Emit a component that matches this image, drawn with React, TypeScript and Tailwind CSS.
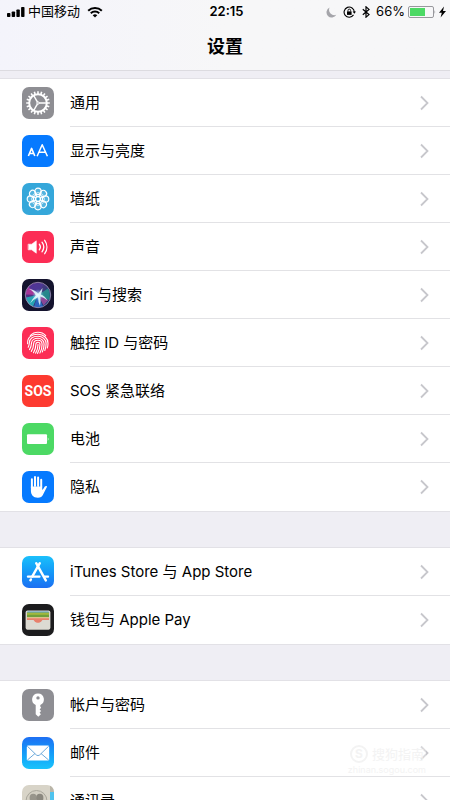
import type { ReactNode } from "react";

type Item = {
  label: string;
  tile: string;
  icon: ReactNode;
};

const range = (n: number) => Array.from({ length: n }, (_, i) => i);

function GearIcon() {
  return (
    <svg viewBox="0 0 32 32" fill="none" stroke="#fff">
      <circle cx="16" cy="16" r="8.8" strokeWidth="2" />
      {range(20).map((i) => (
        <path
          key={i}
          d="M16 7.2V4.2"
          strokeWidth="1.6"
          transform={`rotate(${i * 18} 16 16)`}
        />
      ))}
      {[90, 210, 330].map((deg) => (
        <path
          key={deg}
          d="M16 15V7.5"
          strokeWidth="1.4"
          transform={`rotate(${deg} 16 16)`}
        />
      ))}
      <circle cx="16" cy="16" r="1.2" strokeWidth="1" />
    </svg>
  );
}

function DisplayIcon() {
  return (
    <svg viewBox="0 0 32 32" fill="none" stroke="#fff" strokeLinejoin="round">
      <path d="M6.4 21L9.6 13.4L12.8 21M7.5 18.5h4.2" strokeWidth="1.6" />
      <path d="M15.1 21.2L20.2 9.8L25.4 21.2M17 17.3h6.4" strokeWidth="1.5" />
    </svg>
  );
}

function WallpaperIcon() {
  return (
    <svg viewBox="0 0 32 32" fill="none" stroke="#fff" strokeWidth="1.2">
      {range(8).map((i) => (
        <g key={i} transform={`rotate(${i * 45} 16 16)`}>
          <circle cx="16" cy="8.4" r="3.2" fill="#fff" fillOpacity="0.15" />
          <ellipse cx="16" cy="11.8" rx="1.7" ry="2.3" strokeWidth="0.7" />
        </g>
      ))}
      <circle cx="16" cy="16" r="2.6" />
    </svg>
  );
}

function SoundIcon() {
  return (
    <svg viewBox="0 0 32 32" fill="none" stroke="#fff" strokeLinecap="round">
      <path
        d="M6.5 13.2h3.2L14.3 9.8v12.4L9.7 18.8H6.5z"
        fill="#fff"
        strokeWidth="0.6"
      />
      <path d="M17.3 13.2a4.6 4.6 0 0 1 0 5.6" strokeWidth="1.3" />
      <path d="M20 11.2a8 8 0 0 1 0 9.6" strokeWidth="1.3" />
      <path d="M22.7 9.3a11.4 11.4 0 0 1 0 13.4" strokeWidth="1.3" />
    </svg>
  );
}

function SiriIcon() {
  return (
    <svg viewBox="0 0 32 32" fill="none">
      <defs>
        <radialGradient id="siri-core">
          <stop offset="0" stopColor="#fff" />
          <stop offset="0.3" stopColor="#c8f6ff" stopOpacity="0.7" />
          <stop offset="1" stopColor="#5fb8e8" stopOpacity="0" />
        </radialGradient>
        <linearGradient id="siri-orb" x1="0.1" y1="0.2" x2="0.9" y2="0.8">
          <stop offset="0" stopColor="#5a2a8c" />
          <stop offset="0.45" stopColor="#453a80" />
          <stop offset="1" stopColor="#123f72" />
        </linearGradient>
      </defs>
      <circle cx="16" cy="16" r="12.6" fill="url(#siri-orb)" />
      <path d="M16 16L5.5 9.5Q12 2 21.5 5.5z" fill="#4f379c" opacity="0.7" />
      <path d="M16 16L4 18.5Q5 25.5 11 27.5z" fill="#1fc8c4" opacity="0.75" />
      <path d="M16 16L12 27.8Q17 29.5 21 27.4z" fill="#2b6fd0" opacity="0.8" />
      <path d="M16 16L27 21Q29 15 26 9.5z" fill="#25b997" opacity="0.6" />
      <path d="M16 16L6.5 8Q4 12 3.8 15.5z" fill="#d13aa2" opacity="0.65" />
      <path d="M16 16L21.6 26.6L26.6 21z" fill="#d04fae" opacity="0.6" />
      <circle cx="16" cy="16" r="6" fill="url(#siri-core)" />
      <path
        d="M16.2 14.8Q13 10.5 7 10Q12 12.5 13.8 16.5Q10 20 8 24.5Q12 20 16 18.3Q16 23 18 27Q19 21 18.3 17.6Q22 18.5 25.5 21.5Q22.5 16.8 18.8 15.6Q20.5 12 20.5 9Q18.5 11.500 16.2 14.8z"
        fill="#e6fbff"
        opacity="0.85"
      />
      <circle cx="16" cy="16" r="12.7" stroke="#b9a5cc" strokeWidth="0.7" />
    </svg>
  );
}

function TouchIdIcon() {
  return (
    <svg
      viewBox="0 0 32 32"
      fill="none"
      stroke="#fff"
      strokeWidth="1.1"
      strokeLinecap="round"
    >
      <path d="M8.3 8.6a10.6 10.6 0 0 1 15.4 0" />
      <path d="M5.6 16.6C5.2 9.8 10 7.3 16 7.3S26 11.5 26 16.2c0 2 0 3-.7 4.8" />
      <path d="M6.2 20.2c1-2 1.1-3.3 1.2-4.7C7.8 11.2 11.5 9.3 16 9.3s8 3.2 8.1 7.3c0 2.6-.3 4.6-1.3 6.9" />
      <path d="M7.5 22.6c1.6-2.6 1.9-4.3 2-6.6.2-3 3.2-4.7 6.5-4.7s6 2.5 6.1 5.6c0 3-.6 5.6-1.8 8" />
      <path d="M9.3 24.4c2-3 2.3-5.3 2.4-8 .1-2 2-3.1 4.3-3.1s4 1.7 4.1 3.9c0 3.3-.6 6.1-2.2 8.9" />
      <path d="M11.5 25.7c2-3.2 2.4-5.8 2.4-8.6 0-1.2 1-1.8 2.1-1.8s2 .8 2 2c0 3.4-.8 6.3-2.5 9.1" />
      <path d="M16 17.4c0 3.5-.7 6.1-2.4 8.7" />
    </svg>
  );
}

function BatteryIcon() {
  return (
    <svg viewBox="0 0 32 32" fill="#fff">
      <rect x="5" y="11.3" width="20" height="9.6" rx="1" />
      <path d="M25.8 14.3q1.6 1.8 0 3.6z" />
    </svg>
  );
}

function HandIcon() {
  return (
    <svg
      viewBox="0 0 32 32"
      fill="none"
      stroke="#fff"
      strokeWidth="2"
      strokeLinecap="round"
    >
      <path d="M9.9 17V8.2M13 15V5.9M16.1 15V6.4M19.2 16V8.8" />
      <path
        d="M8.9 15.5h11.3v3.6c1.1-.7 1.7-2.4 2.6-3.5.9-1 2.6-.6 2.1.5l-3.8 7.3c-1 2.2-2.6 3.3-5.2 3.3-4.8 0-7-3-7-7.2z"
        fill="#fff"
        stroke="none"
      />
    </svg>
  );
}

function AppStoreIcon() {
  return (
    <svg
      viewBox="0 0 32 32"
      fill="none"
      stroke="#fff"
      strokeWidth="2.4"
      strokeLinecap="round"
    >
      <path d="M14.2 7.2L23.8 24.4" />
      <path d="M17.8 7.2L10.3 20.4" />
      <path d="M8.9 23.4L8.4 24.3" />
      <path d="M6 20.6h11.4M22.5 20.6H26" />
    </svg>
  );
}

function WalletIcon() {
  return (
    <svg viewBox="0 0 32 32">
      <rect x="3.6" y="6.6" width="24.8" height="19" rx="1.8" fill="#d9d7cf" />
      <path d="M5 8.5q0-1 1-1h20q1 0 1 1v2H5z" fill="#4c9cc4" />
      <path d="M5 8.6h22v3H5z" fill="#a3b83c" />
      <path d="M5 10.8h22v2.8H5z" fill="#6f9f3a" />
      <path d="M5 13.2h22v2H5z" fill="#ecc58f" />
      <path d="M5 14.2h22V19H5z" fill="#e8806c" />
      <path
        d="M4 16h7.2c1.1 0 1.4 2.8 4.8 2.8s3.7-2.8 4.8-2.8H28v8.2q0 1.4-1.4 1.4H5.4Q4 25.6 4 24.2z"
        fill="#dcdad2"
      />
    </svg>
  );
}

function KeyIcon() {
  return (
    <svg viewBox="0 0 32 32" fill="#fff">
      <path
        fillRule="evenodd"
        d="M16 4.4a6 6 0 0 0-2.3 11.5v9.3l2.6 2.5 2.6-2.4-1.3-1.7 1.5-1.6-1.5-1.6 1.5-1.7-.8-1.2v-1.6A6 6 0 0 0 16 4.4zm0 2.8a1.7 1.7 0 1 1 0 3.4 1.7 1.7 0 0 1 0-3.4z"
      />
    </svg>
  );
}

function MailIcon() {
  return (
    <svg viewBox="0 0 32 32" strokeLinejoin="round">
      <rect x="4.8" y="8.6" width="22.4" height="15" rx="1.3" fill="#fff" />
      <path
        d="M5.3 9.2L14.4 18q1.6 1.3 3.2 0L26.7 9.2M5.3 23.1l7.7-6.6M26.7 23.1L19 16.5"
        fill="none"
        stroke="#5b9fd6"
        strokeWidth="0.9"
      />
    </svg>
  );
}

function ContactsIcon() {
  return (
    <svg viewBox="0 0 32 32">
      <path d="M28 0h4v7h-4z" fill="#b9b5a8" />
      <path d="M28 7h4v13h-4z" fill="#4fc3ee" />
      <path d="M28 20h4v12h-4z" fill="#f2a33c" />
      <circle cx="14.5" cy="16" r="10.5" fill="#d3cfc3" stroke="#a9a69b" />
      <ellipse cx="11.2" cy="13" rx="3.6" ry="4.2" fill="#98958b" />
      <ellipse cx="17.8" cy="13" rx="3.6" ry="4.2" fill="#8b887f" />
      <path d="M7 23q1-4.5 7.5-4.5T22 23q-7.5 5-15 0z" fill="#98958b" />
    </svg>
  );
}

const groups: Item[][] = [
  [
    { label: "通用", tile: "bg-[#8e8e93]", icon: <GearIcon /> },
    { label: "显示与亮度", tile: "bg-[#067aff]", icon: <DisplayIcon /> },
    { label: "墙纸", tile: "bg-[#35a7da]", icon: <WallpaperIcon /> },
    { label: "声音", tile: "bg-[#fc2d55]", icon: <SoundIcon /> },
    { label: "Siri 与搜索", tile: "bg-[#14132e]", icon: <SiriIcon /> },
    { label: "触控 ID 与密码", tile: "bg-[#fc2d55]", icon: <TouchIdIcon /> },
    {
      label: "SOS 紧急联络",
      tile: "bg-[#fd3a30]",
      icon: (
        <span className="font-['Roboto','Liberation_Sans',sans-serif] text-sm font-bold text-white">
          SOS
        </span>
      ),
    },
    { label: "电池", tile: "bg-[#4cd964]", icon: <BatteryIcon /> },
    { label: "隐私", tile: "bg-[#067aff]", icon: <HandIcon /> },
  ],
  [
    {
      label: "iTunes Store 与 App Store",
      tile: "bg-linear-to-b from-[#1cc0fb] to-[#1d6ff2]",
      icon: <AppStoreIcon />,
    },
    { label: "钱包与 Apple Pay", tile: "bg-[#1c1c1e]", icon: <WalletIcon /> },
  ],
  [
    { label: "帐户与密码", tile: "bg-[#8e8e93]", icon: <KeyIcon /> },
    {
      label: "邮件",
      tile: "bg-linear-to-b from-[#1e6ff3] to-[#1bc4fb]",
      icon: <MailIcon />,
    },
    { label: "通讯录", tile: "bg-[#d8d4c8]", icon: <ContactsIcon /> },
  ],
];

function StatusBar() {
  return (
    <div className="grid h-6 grid-cols-[1fr_auto_1fr] items-center pr-1 pl-[7px] text-[13px]">
      <div className="flex items-center">
        <svg className="h-[10px] w-[18px]" viewBox="0 0 18 10">
          <rect x="0" y="6" width="3.4" height="4" rx="0.8" />
          <rect x="4.7" y="4.5" width="3.4" height="5.5" rx="0.8" />
          <rect x="9.4" y="2.5" width="3.4" height="7.5" rx="0.8" />
          <rect x="14.1" y="0" width="3.4" height="10" rx="0.8" />
        </svg>
        <span className="ml-[3px]">中国移动</span>
        <svg
          className="ml-[7px] h-3 w-4"
          viewBox="0 0 16 12"
          fill="none"
          stroke="#000"
          strokeWidth="2"
        >
          <path d="M1.2 4.7a9.7 9.7 0 0 1 13.6 0" />
          <path d="M3.8 7.3a6 6 0 0 1 8.4 0" />
          <path
            d="M8 11.6L5.7 9.3a3.3 3.3 0 0 1 4.6 0z"
            fill="#000"
            stroke="none"
          />
        </svg>
      </div>
      <span className="font-semibold">22:15</span>
      <div className="flex items-center justify-end">
        <svg className="h-[11px] w-[11px]" viewBox="0 0 11 11" fill="#a5a5aa">
          <path d="M3.6.6a5.2 5.2 0 1 0 6.7 7.2A5.3 5.3 0 0 1 3.6.6z" />
        </svg>
        <svg
          className="ml-[6px] h-3 w-[13px]"
          viewBox="0 0 13 12"
          fill="none"
          stroke="#000"
        >
          <path d="M10.5 8.9A5.1 5.1 0 1 1 11.3 6" strokeWidth="1.1" />
          <path d="M9.6 5.4h3.4L11.3 7.8z" fill="#000" stroke="none" />
          <path d="M4 5.4h4.6v3.5H4z" fill="#000" stroke="none" />
          <path d="M5 5.5V4.4a1.3 1.3 0 0 1 2.6 0v1.1" strokeWidth="0.9" />
        </svg>
        <svg
          className="ml-[6px] h-3 w-2"
          viewBox="0 0 8 12"
          fill="none"
          stroke="#000"
          strokeWidth="1.2"
        >
          <path d="M.8 3.2L7 8.6L4 11.2V.8L7 3.4L.8 8.8" />
        </svg>
        <span className="ml-[6px]">66%</span>
        <svg className="ml-[3px] h-3 w-7" viewBox="0 0 28 12">
          <rect
            x="0.5"
            y="0.5"
            width="25"
            height="11"
            rx="1.5"
            fill="none"
            stroke="#98989d"
          />
          <rect x="2" y="2" width="15" height="8" fill="#4cd964" />
          <path d="M26.5 4q1.5 2 0 4z" fill="#98989d" />
        </svg>
        <svg className="ml-[3px] h-3 w-[7px]" viewBox="0 0 7 12">
          <path d="M5 .5L0 6.8h2.8L1.6 11.5L7 5H4z" />
        </svg>
      </div>
    </div>
  );
}

function Chevron() {
  return (
    <svg
      className="h-4 w-[9px] shrink-0"
      viewBox="0 0 9 16"
      fill="none"
      stroke="#c7c7cc"
      strokeWidth="1.8"
    >
      <path d="M1 1.5L7.5 8L1 14.5" />
    </svg>
  );
}

function Row({ label, tile, icon }: Item) {
  return (
    <li className="group">
      <a href="#" className="flex h-12 items-center pl-[22px]">
        <span
          className={`flex size-8 shrink-0 items-center justify-center overflow-hidden rounded-[7px] ${tile}`}
        >
          {icon}
        </span>
        <span className="ml-4 flex h-full flex-1 items-center justify-between border-b border-[#e2e2e5] pr-[21px] group-last:border-transparent">
          <span className="pt-0.5">{label}</span>
          <Chevron />
        </span>
      </a>
    </li>
  );
}

function Watermark() {
  return (
    <div
      aria-hidden="true"
      className="pointer-events-none absolute right-6 bottom-6 flex flex-col items-center bg-white/30 text-[#f3f3f3]"
    >
      <div className="flex items-center gap-1 text-[13px] leading-5">
        <span className="flex size-[18px] items-center justify-center rounded-full border-2 text-xs font-bold">
          S
        </span>
        搜狗指南
      </div>
      <span className="text-[9px] leading-3">zhinan.sogou.com</span>
    </div>
  );
}

export default function App() {
  return (
    <div className="relative flex h-screen flex-col overflow-hidden bg-[#efeef4] font-['Inter','Noto_Sans_CJK_SC',sans-serif] text-black">
      <header className="shrink-0 border-b border-[#dcdbe0] bg-linear-to-r from-[#f4f4fb] to-[#f7f7f8] to-50%">
        <StatusBar />
        <h1 className="flex h-[46px] items-center justify-center text-lg font-bold">
          设置
        </h1>
      </header>
      <main className="flex flex-1 flex-col gap-[37px] overflow-y-auto pt-2 text-[15px] [scrollbar-width:none]">
        {groups.map((items, i) => (
          <ul key={i} className="shrink-0 bg-white ring-1 ring-[#e2e1e6]">
            {items.map((item) => (
              <Row key={item.label} {...item} />
            ))}
          </ul>
        ))}
      </main>
      <Watermark />
    </div>
  );
}
